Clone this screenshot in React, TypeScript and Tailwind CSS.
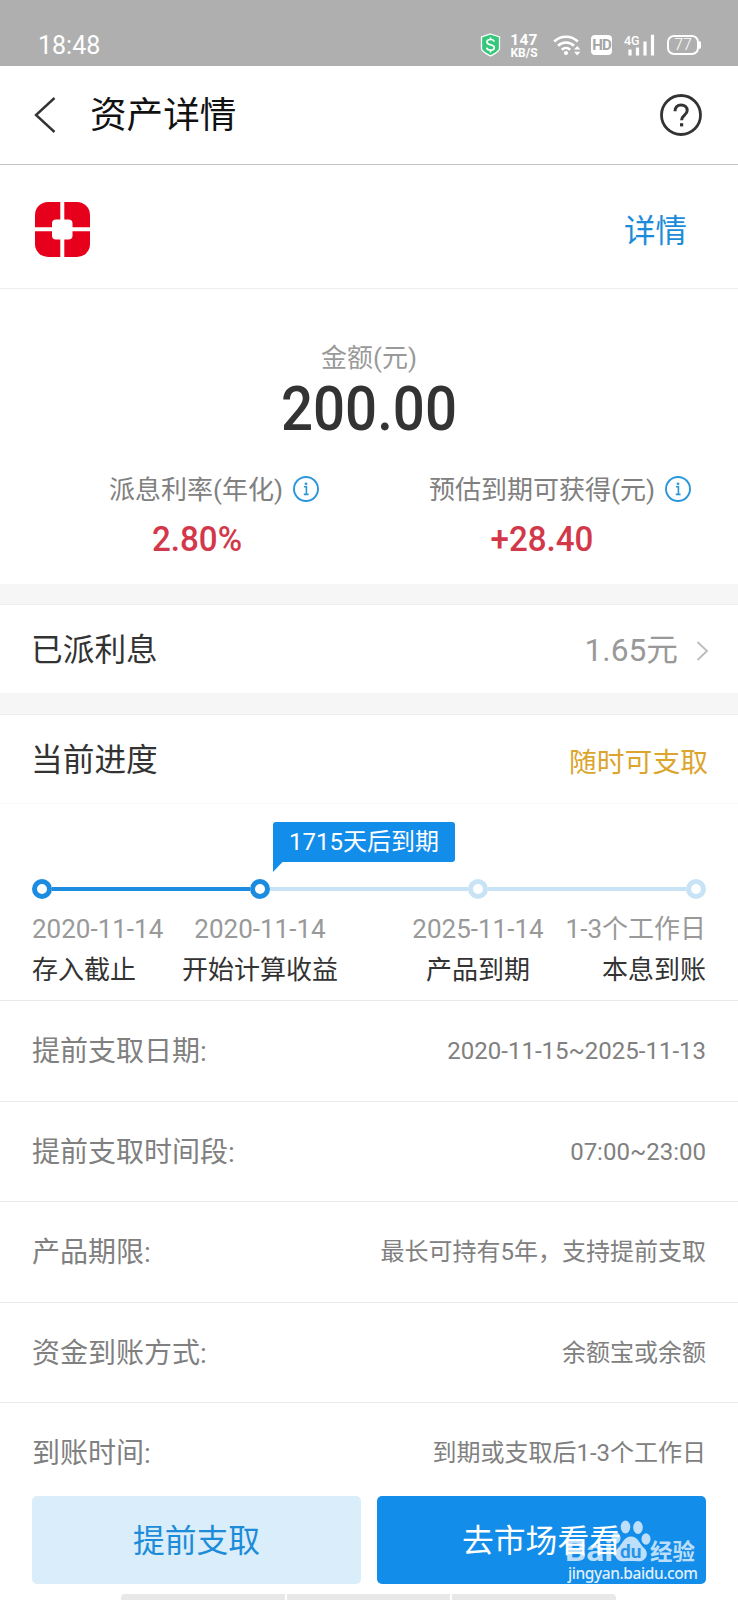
import { type ReactNode } from "react";
import clsx from "clsx";

interface Step {
  date: string;
  label: string;
  done: boolean;
}

interface DetailRow {
  label: string;
  value: string;
}

const STEPS: Step[] = [
  { date: "2020-11-14", label: "存入截止", done: true },
  { date: "2020-11-14", label: "开始计算收益", done: true },
  { date: "2025-11-14", label: "产品到期", done: false },
  { date: "1-3个工作日", label: "本息到账", done: false },
];

const DETAILS: DetailRow[] = [
  { label: "提前支取日期:", value: "2020-11-15~2025-11-13" },
  { label: "提前支取时间段:", value: "07:00~23:00" },
  { label: "产品期限:", value: "最长可持有5年，支持提前支取" },
  { label: "资金到账方式:", value: "余额宝或余额" },
  { label: "到账时间:", value: "到期或支取后1-3个工作日" },
];

function StatusBar() {
  return (
    <div className="flex h-[66px] items-center bg-[#afafaf] pt-[24px] pr-[37px] pl-[38px] text-white">
      <span className="text-[25px] leading-none">18:48</span>
      <svg className="ml-auto" width="21" height="24" viewBox="0 0 21 24">
        <path
          d="M10.5 1 19.5 4v11.5c0 3-5.500 5.500-9 7.500-3.500-2-9-4.500-9-7.500V4z"
          fill="#35c77c"
          stroke="#fff"
          strokeWidth="1.300"
        />
        <path
          d="M14.200 8.600c-.4-1.500-1.800-2.100-3.700-2.100-2.100 0-3.600.9-3.600 2.600 0 3.700 7.400 1.700 7.400 5.400 0 1.700-1.600 2.700-3.800 2.700-2.100 0-3.600-.9-3.900-2.500M10.500 4.500v2M10.500 17.200v2.300"
          fill="none"
          stroke="#fff"
          strokeWidth="1.700"
        />
      </svg>
      <div className="mr-px ml-[9px] flex w-[28px] flex-col items-center pt-[2px] font-bold">
        <span className="text-[15.500px] leading-[13px] tracking-[0.300px]">147</span>
        <span className="text-[12px] leading-[12px]">KB/S</span>
      </div>
      <svg className="ml-[14px]" width="28" height="22" viewBox="0 0 28 22">
        <g fill="none" stroke="#fff" strokeWidth="2.600">
          <path d="M1.200 7.500a17 17 0 0 1 23.600 0" />
          <path d="M5 11.700a11.500 11.500 0 0 1 16 0" />
          <path d="M8.800 15.700a6.500 6.500 0 0 1 8.400 0" />
        </g>
        <circle cx="13" cy="19" r="2.100" fill="#fff" />
        <path d="m21 15.500 3.200-3.600 3.200 3.600zM21 17.800l3.200 3.600 3.200-3.600z" fill="#fff" />
      </svg>
      <span className="ml-[10px] flex h-[20px] w-[21px] items-center justify-center rounded-[4px] bg-white text-[15px] leading-none font-bold tracking-[-1px] text-[#a5a5a5]">
        HD
      </span>
      <svg className="ml-[12px]" width="31" height="22" viewBox="0 0 31 22">
        <text x="0" y="11" fontSize="12.500" fontWeight="500" fill="#fff">
          4G
        </text>
        <path
          d="M6 21.500v-6M13.500 21.500v-8M21 21.500V7.500M28.500 21.500V.800"
          stroke="#fff"
          strokeWidth="3.200"
        />
      </svg>
      <div className="ml-[12px] flex items-center">
        <span className="flex h-[20px] w-[32px] items-center justify-center rounded-[7px] border-2 border-white text-[16px] leading-none font-light">
          77
        </span>
        <span className="h-[8px] w-[2px] rounded-r bg-white" />
      </div>
    </div>
  );
}

function Header() {
  return (
    <header className="flex h-[99px] items-center border-b border-[#c4c4c4] pr-[36px] pl-[34px]">
      <svg width="22" height="36" viewBox="0 0 22 36">
        <path d="M20.500 1 2 18l18.500 17" fill="none" stroke="#333" strokeWidth="2.400" />
      </svg>
      <h1 className="ml-[34px] pt-[3px] text-[36.600px] leading-none text-[#111]">资产详情</h1>
      <svg className="ml-auto" width="42" height="42" viewBox="0 0 42 42">
        <circle cx="21" cy="21" r="19.500" fill="none" stroke="#333" strokeWidth="2.800" />
        <path
          d="M15 17.200c0-4 2.500-6.300 6-6.300s6.200 2.300 6.200 5.700c0 4.600-5.600 4.600-5.600 9.600"
          fill="none"
          stroke="#333"
          strokeWidth="3"
        />
        <path d="M20 29.200h3.200v3.200H20z" fill="#333" />
      </svg>
    </header>
  );
}

function BankLogo() {
  return (
    <svg width="55" height="55" viewBox="0 0 55 55">
      <rect width="55" height="55" rx="13" fill="#e6001b" />
      <path d="M27.300 0v55M0 27.200h55" stroke="#fff" strokeWidth="4" />
      <rect x="17" y="17.500" width="20.500" height="20" rx="4" fill="#fff" />
    </svg>
  );
}

function InfoIcon() {
  return (
    <svg width="26" height="26" viewBox="0 0 26 26">
      <circle cx="13" cy="13" r="12" fill="none" stroke="#2a97dc" strokeWidth="1.900" />
      <path d="M11 10.800h2.400v7.600M10.800 18.400h4.800" fill="none" stroke="#2a97dc" strokeWidth="1.600" />
      <circle cx="13" cy="7.800" r="1.400" fill="#2a97dc" />
    </svg>
  );
}

function Metric({ label, children }: { label: string; children: ReactNode }) {
  return (
    <div>
      <div className="flex h-[26px] items-center gap-[10px]">
        <span className="pt-px text-[26px] leading-none whitespace-nowrap text-[#808080]">{label}</span>
        <InfoIcon />
      </div>
      {children}
    </div>
  );
}

function Progress() {
  return (
    <div className="h-[197px] border-t border-[#fafafa] pt-[18px]">
      <div className="relative ml-[273px] flex h-[40px] w-[182px] items-center justify-center rounded-[3px] bg-[#138dea] text-[24px] leading-none text-white">
        1715天后到期
        <svg className="absolute top-[37px] left-0" width="14" height="13" viewBox="0 0 14 13">
          <path d="M0 0h14L9.500 3 0 13z" fill="#138dea" />
        </svg>
      </div>

      <div className="mx-[32px] mt-[17px] flex h-[20px] items-center">
        {STEPS.map((step, index) => (
          <div key={step.label} className={clsx("flex items-center", index > 0 && "flex-1")}>
            {index > 0 ? (
              <span className={clsx("h-[4px] flex-1", step.done ? "bg-[#1c8ce0]" : "bg-[#c8e3f5]")} />
            ) : null}
            <span
              className={clsx(
                "size-[20px] rounded-full border-[5px] bg-white",
                step.done ? "border-[#1c8ce0]" : "border-[#c8e3f5]",
              )}
            />
          </div>
        ))}
      </div>

      <div className="mt-[16px] grid grid-cols-[119px_218px_218px_119px] pl-[32px]">
        {STEPS.map((step, index) => (
          <div
            key={step.label}
            className={clsx(
              "flex flex-col whitespace-nowrap",
              index === 0 && "items-start",
              index === STEPS.length - 1 && "items-end",
              index > 0 && index < STEPS.length - 1 && "items-center",
            )}
          >
            <span className="text-[26px] leading-[28px] text-[#999]">{step.date}</span>
            <span className="mt-[13px] text-[26px] leading-[28px] text-[#333]">{step.label}</span>
          </div>
        ))}
      </div>
    </div>
  );
}

function Watermark() {
  return (
    <div className="absolute top-[23px] left-[189px] text-white" aria-hidden="true">
      <svg width="136" height="66" viewBox="0 0 136 66">
        <g fill="#fff" fillOpacity="0.720">
          <text x="-1" y="42" fontSize="29" fontWeight="700" textLength="48" lengthAdjust="spacingAndGlyphs">
            Bai
          </text>
          <ellipse cx="59.500" cy="8" rx="4.800" ry="6.500" />
          <ellipse cx="72" cy="8.500" rx="4.800" ry="6.500" />
          <ellipse cx="50" cy="19" rx="4.500" ry="5.800" />
          <ellipse cx="80" cy="20" rx="4.500" ry="5.800" />
          <path d="M65 17.500c7 0 8.500 7.500 13.500 12 5.500 6 .5 13.500-6.500 12.800-5-.5-9-.5-14 0-7 .700-12-6.800-6.500-12.800 5-4.500 6.500-12 13.500-12z" />
          <text x="84" y="40.500" fontSize="22.500" fontWeight="700" textLength="45">
            经验
          </text>
        </g>
        <text x="54" y="39" fontSize="19" fontWeight="700" fill="#2993e8">
          du
        </text>
        <text
          x="2"
          y="60"
          fontSize="15.500"
          textLength="130"
          fill="#fff"
          fillOpacity="0.880"
          className="font-['Noto_Sans'] font-medium"
        >
          jingyan.baidu.com
        </text>
      </svg>
    </div>
  );
}

export default function App() {
  return (
    <main className="flex h-[1600px] w-[738px] flex-col overflow-hidden bg-white font-['Roboto','Noto_Sans_CJK_SC',sans-serif]">
      <StatusBar />
      <Header />

      <section className="flex h-[124px] items-center justify-between border-b border-[#eee] pt-[5px] pr-[51px] pl-[35px]">
        <BankLogo />
        <a className="pt-[6px] text-[31.500px] leading-none text-[#1c8cd8]">详情</a>
      </section>

      <section className="h-[295px] pt-[56px]">
        <p className="text-center text-[26px] leading-[26px] text-[#999]">金额(元)</p>
        <p className="mt-[7px] scale-x-[0.910] text-center text-[62px] leading-[62px] font-medium text-[#333]">
          200.00
        </p>
        <div className="mt-[36px] flex pl-[109px]">
          <div className="w-[320px]">
            <Metric label="派息利率(年化)">
              <p className="mt-[20px] w-[176px] scale-x-[0.960] text-center text-[34.500px] leading-[34px] font-medium text-[#d2384a]">
                2.80%
              </p>
            </Metric>
          </div>
          <Metric label="预估到期可获得(元)">
            <p className="mt-[20px] w-[226px] scale-x-[0.960] text-center text-[34.500px] leading-[34px] font-medium text-[#d2384a]">
              +28.40
            </p>
          </Metric>
        </div>
      </section>

      <div className="h-[21px] border-b border-[#eee] bg-[#f6f6f6]" />

      <section className="flex h-[88px] items-center pt-[3px] pr-[29px] pl-[31px]">
        <h2 className="text-[31.700px] leading-none text-[#333]">已派利息</h2>
        <span className="ml-auto text-[31.700px] leading-none text-[#999]">1.65元</span>
        <svg className="ml-[18px]" width="13" height="20" viewBox="0 0 13 20">
          <path d="m1.500 1 9.500 9-9.500 9" fill="none" stroke="#bbb" strokeWidth="1.800" />
        </svg>
      </section>

      <div className="h-[22px] border-b border-[#eee] bg-[#f6f6f6]" />

      <section className="flex h-[88px] items-center justify-between pt-[4px] pr-[30px] pl-[31px]">
        <h2 className="text-[31.700px] leading-none text-[#333]">当前进度</h2>
        <span className="pt-[4px] text-[27.800px] leading-none text-[#dba52e]">随时可支取</span>
      </section>

      <Progress />

      <dl className="h-[496px] shrink-0">
        {DETAILS.map((row) => (
          <div
            key={row.label}
            className="flex h-[100.500px] items-center justify-between border-t border-[#eaeaea] px-[32px]"
          >
            <dt className="pt-[3px] text-[28px] leading-none text-[#808080]">{row.label}</dt>
            <dd className="pt-px text-[24px] leading-none text-[#808080]">{row.value}</dd>
          </div>
        ))}
      </dl>

      <footer className="relative flex h-[88px] shrink-0 gap-[16px] px-[32px]">
        <button className="flex-1 rounded-[5px] bg-[#daedfa] pt-[3px] text-[31.800px] leading-none text-[#1c8cd8]">
          提前支取
        </button>
        <button className="relative flex-1 rounded-[5px] bg-[#138dea] pt-[3px] text-[31.800px] leading-none text-white">
          去市场看看
          <Watermark />
        </button>
      </footer>

      <div className="mt-[10px] ml-[121px] flex h-[6px] w-[495px] shrink-0 gap-[2px] overflow-hidden rounded-t-[4px]">
        <span className="flex-1 bg-[#e8e8e8]" />
        <span className="flex-1 bg-[#e8e8e8]" />
        <span className="flex-1 bg-[#e8e8e8]" />
      </div>
    </main>
  );
}
